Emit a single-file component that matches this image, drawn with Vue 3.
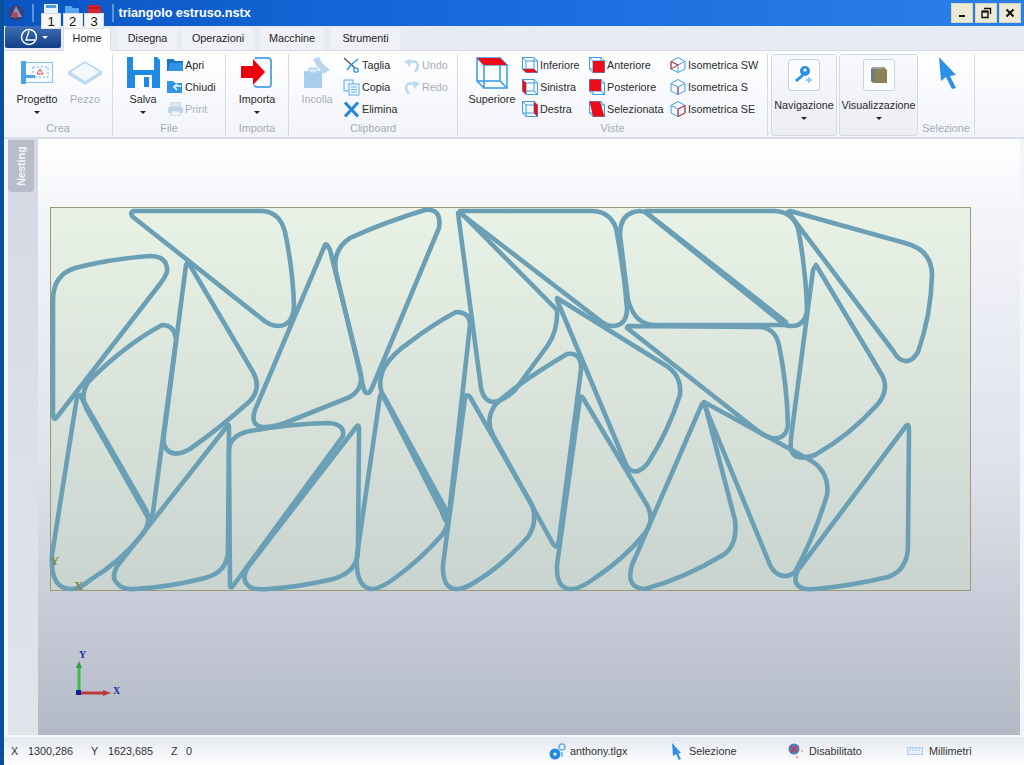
<script setup>
const tabs = [
  { label: 'Home', width: 48, gap: 7, active: true },
  { label: 'Disegna', width: 59, gap: 5 },
  { label: 'Operazioni', width: 72, gap: 6 },
  { label: 'Macchine', width: 64, gap: 7 },
  { label: 'Strumenti', width: 69, gap: 0 }
]

const wireViews = [
  [
    { label: 'Inferiore', face: '1,24 24,24 31,31 8,31' },
    { label: 'Sinistra', face: '1,1 8,8 8,31 1,24' },
    { label: 'Destra', face: '24,1 31,8 31,31 24,24' }
  ],
  [
    { label: 'Anteriore', face: '8,8 31,8 31,31 8,31' },
    { label: 'Posteriore', face: '1,1 24,1 24,24 1,24' },
    { label: 'Selezionata', face: '1,1 22,1 31,31 8,31' }
  ]
]

const isoViews = [
  { label: 'Isometrica SW', red: 'M2 9 L16 16 L2 24 Z' },
  { label: 'Isometrica S', red: 'M16 16 L16 31' },
  { label: 'Isometrica SE', red: 'M30 9 L16 16 L16 31 L30 24 Z' }
]

// nested parts, in page coordinates
const pieces = [
  'M53 412 L53 300 Q53 275 75 268 Q110 259 150 256 Q168 256 167 272 Q165 278 160 284 L57 417 Q53 422 53 412Z',
  'M134 211 L262 211 Q280 212 285 232 Q293 270 294 306 Q293 326 278 326 Q270 326 262 319 L133 217 Q129 213 134 211Z',
  'M188 262 L253 372 Q262 388 250 401 Q220 428 190 449 Q172 459 165 447 Q163 443 164 435 L186 265Z',
  'M162 325 Q175 325 176 340 L153 512 Q150 522 146 514 L86 408 Q80 396 88 382 Q125 345 162 325Z',
  'M77 397 L52 555 Q50 590 72 589 Q80 589 90 580 Q120 562 142 535 Q152 522 146 510 L80 395Z',
  'M228 425 L118 565 Q110 578 118 584 Q123 590 135 589 Q170 587 205 578 Q228 572 228 550 L229 430 Q229 424 228 425Z',
  'M230 585 L229 450 Q230 435 250 431 Q290 424 328 423 Q345 424 343 436 L233 586 Q230 589 230 585Z',
  'M357 426 L248 567 Q240 580 250 587 Q255 590 268 589 Q300 587 333 579 Q358 572 358 550 L359 430 Q359 424 357 426Z',
  'M325 245 L255 410 Q250 425 262 427 Q270 428 285 423 L350 397 Q365 388 360 370 L330 250 Q326 242 325 245Z',
  'M425 210 Q442 208 439 228 L372 388 Q368 397 364 390 L336 272 Q332 250 350 238 Q385 222 425 210Z',
  'M456 312 Q470 312 470 325 L449 515 Q447 528 442 512 L385 400 Q376 385 384 368 Q392 354 410 342 Q432 325 456 312Z',
  'M380 396 L357 555 Q355 588 372 589 Q380 589 395 578 Q420 560 442 535 Q452 522 445 508 L384 396 Q382 392 380 396Z',
  'M458 213 L481 388 Q484 402 494 402 Q505 400 515 390 L548 345 Q558 330 557 310 L460 212Z',
  'M460 211 L593 211 Q610 212 616 228 Q624 270 627 308 Q627 326 612 326 Q606 326 598 319 L460 213Z',
  'M786 325 L655 325 Q635 325 628 300 L620 235 Q620 212 640 211 Q645 211 652 217 L786 322Z',
  'M646 211 L775 211 Q792 212 798 228 Q806 270 807 310 Q805 327 790 326 Q785 326 780 321 L645 212Z',
  'M790 211 L905 243 Q932 250 932 275 Q931 315 918 352 Q912 362 905 361 Q898 360 894 352 L788 212Z',
  'M816 265 L882 375 Q890 390 877 405 Q850 435 815 455 Q795 462 791 450 Q790 445 792 430 L813 270Z',
  'M628 326 L760 327 Q775 328 779 345 Q787 385 788 425 Q786 440 772 438 Q765 437 758 431 L627 328Z',
  'M557 298 L665 365 Q682 375 680 395 Q668 432 648 463 Q640 473 633 471 Q628 470 625 462 L557 300Z',
  'M567 354 Q582 352 581 370 L559 540 Q557 552 552 542 L493 435 Q485 420 495 405 Q515 385 567 354Z',
  'M580 398 L557 565 Q556 590 572 589 Q580 589 595 578 Q625 558 645 533 Q655 520 647 505 L583 398 Q581 395 580 398Z',
  'M465 398 L443 565 Q442 590 458 589 Q465 589 480 579 Q505 563 528 537 Q538 522 532 505 L470 397 Q466 393 465 398Z',
  'M702 404 L632 565 Q625 588 645 589 Q685 578 723 555 Q738 545 735 520 L705 405Z',
  'M704 402 L810 460 Q830 472 827 495 Q815 535 795 572 Q788 578 780 575 Q774 573 770 565 L704 404Z',
  'M906 426 L798 570 Q792 582 800 587 Q805 590 815 589 Q850 586 888 577 Q908 570 908 545 L909 430 Q909 423 906 426Z'
]
</script>

<template>
  <div class="window">
    <header class="titlebar">
      <svg class="app-icon" viewBox="0 0 18 18">
        <circle cx="9" cy="9" r="8" fill="#33407e" />
        <path d="M9 2 L15 13 L4 13Z" fill="#8d93b8" />
        <circle cx="8" cy="11" r="3" fill="#b2485c" />
      </svg>
      <span class="bar-sep"></span>
      <div class="quick">
        <div class="quick-item">
          <svg viewBox="0 0 16 14"><rect x="1" y="0" width="14" height="14" fill="#e8f2fc" /><rect x="3" y="1" width="10" height="3" fill="#4d97e4" /></svg>
          <span class="keytip">1</span>
        </div>
        <div class="quick-item">
          <svg viewBox="0 0 16 14"><path d="M1 2 H7 L9 4 H15 V13 H1Z" fill="#55a8ee" /></svg>
          <span class="keytip">2</span>
        </div>
        <div class="quick-item">
          <svg viewBox="0 0 16 14"><path d="M2 1 H13 L15 3 V13 H2Z" fill="#d8242c" /><path d="M2 4 H15" stroke="#8f1520" /></svg>
          <span class="keytip">3</span>
        </div>
      </div>
      <span class="bar-sep second"></span>
      <span class="doc-title">triangolo estruso.nstx</span>
      <div class="win-buttons">
        <button class="win-btn"><svg viewBox="0 0 12 12"><rect x="3" y="8" width="6" height="2" fill="#111" /></svg></button>
        <button class="win-btn"><svg viewBox="0 0 12 12"><path d="M4 1.5 H10.5 V7 M2 4.5 H8 V10.5 H2Z" fill="none" stroke="#111" stroke-width="1.4" /><path d="M2 4.5 H8" stroke="#111" stroke-width="2" /></svg></button>
        <button class="win-btn"><svg viewBox="0 0 12 12"><path d="M2.5 2.5 L9.5 9.5 M9.5 2.5 L2.5 9.5" stroke="#111" stroke-width="2" /></svg></button>
      </div>
    </header>

    <nav class="tabrow">
      <button class="app-menu">
        <svg width="20" height="18" viewBox="0 0 20 18">
          <circle cx="10" cy="9" r="7.5" fill="none" stroke="#fff" stroke-width="1.4" />
          <path d="M10 3 L7 12 H16" fill="none" stroke="#fff" stroke-width="1.3" />
        </svg>
        <i class="caret white"></i>
      </button>
      <div
        v-for="t in tabs"
        :key="t.label"
        class="tab"
        :class="{ active: t.active }"
        :style="{ width: t.width + 'px', marginRight: t.gap + 'px' }"
      >{{ t.label }}</div>
    </nav>

    <section class="ribbon">
      <div class="group crea">
        <div class="group-body">
          <div class="big">
            <div class="big-icon">
              <svg width="32" height="23" viewBox="0 0 32 23">
                <rect x="0.5" y="1.5" width="31" height="20" fill="#f4f9fe" stroke="#8cc0ec" />
                <rect x="0" y="0" width="5" height="23" fill="#4da3e8" />
                <rect x="5" y="14" width="9" height="3" fill="#4da3e8" />
                <rect x="12" y="6" width="15" height="10" fill="none" stroke="#6fb2ea" stroke-dasharray="2 2" />
                <path d="M16 13 L19 8 L22 13Z" fill="none" stroke="#e2484c" />
              </svg>
            </div>
            <span>Progetto</span>
            <i class="caret"></i>
          </div>
          <div class="big disabled">
            <div class="big-icon">
              <svg width="34" height="24" viewBox="0 0 34 24">
                <path d="M17 1 L33 11 L17 21 L1 11Z" fill="#f3f8fd" stroke="#a9d0f0" stroke-width="1.4" />
                <path d="M1 11 V13 L17 23 L33 13 V11" fill="none" stroke="#a9d0f0" stroke-width="1.4" />
              </svg>
            </div>
            <span>Pezzo</span>
          </div>
        </div>
        <div class="group-label">Crea</div>
      </div>

      <div class="group file">
        <div class="group-body">
          <div class="big">
            <div class="big-icon">
              <svg width="33" height="31" viewBox="0 0 33 31">
                <path d="M0 0 H30 L33 3 V31 H0Z" fill="#1e8ae4" />
                <rect x="6" y="0" width="21" height="13" fill="#fff" />
                <rect x="8" y="18" width="17" height="13" fill="#fff" />
                <rect x="17" y="20" width="5" height="10" fill="#1e8ae4" />
              </svg>
            </div>
            <span>Salva</span>
            <i class="caret"></i>
          </div>
          <div class="small-col">
            <div class="small">
              <svg width="16" height="14" viewBox="0 0 16 14"><path d="M0 1 H6 L8 3 H16 V13 H1Z" fill="#2f95ea" /><path d="M0 1 V13 H1 L3 5 H16 V3 H8 L6 1Z" fill="#1874c4" /></svg>
              <span>Apri</span>
            </div>
            <div class="small">
              <svg width="16" height="14" viewBox="0 0 16 14"><path d="M0 1 H6 L8 3 H15 V13 H0Z" fill="#2f95ea" /><path d="M14 6 H8 M10 4 L7 7 L10 10" fill="none" stroke="#fff" stroke-width="1.6" /></svg>
              <span>Chiudi</span>
            </div>
            <div class="small disabled">
              <svg width="16" height="14" viewBox="0 0 16 14"><rect x="4" y="0" width="9" height="5" fill="#dfe6ee" stroke="#bfd2e4" /><rect x="1" y="5" width="15" height="6" rx="1" fill="#bcd4ea" /><rect x="4" y="9" width="9" height="5" fill="#f0f4f8" stroke="#bfd2e4" /></svg>
              <span>Print</span>
            </div>
          </div>
        </div>
        <div class="group-label">File</div>
      </div>

      <div class="group importa">
        <div class="group-body">
          <div class="big">
            <div class="big-icon">
              <svg width="32" height="31" viewBox="0 0 32 31">
                <path d="M14 2 Q14 1 15 1 H27 Q30 1 30 4 V27 Q30 30 27 30 H16 Q14 30 13 28" fill="#fff" stroke="#2b8ee0" stroke-width="1.5" />
                <path d="M0 9 H12 V2 L24 15 L12 28 V21 H0Z" fill="#f0000c" />
              </svg>
            </div>
            <span>Importa</span>
            <i class="caret"></i>
          </div>
        </div>
        <div class="group-label">Importa</div>
      </div>

      <div class="group clipboard">
        <div class="group-body">
          <div class="big disabled">
            <div class="big-icon">
              <svg width="28" height="31" viewBox="0 0 28 31">
                <rect x="1" y="14" width="18" height="17" fill="#a9cdec" />
                <rect x="6" y="11" width="8" height="5" fill="#d5e6f5" stroke="#a9cdec" />
                <path d="M10 2 L16 0 L20 7 L27 13 L20 17 L14 9Z" fill="#bad7ef" />
              </svg>
            </div>
            <span>Incolla</span>
          </div>
          <div class="small-col cut-col">
            <div class="small">
              <svg width="17" height="17" viewBox="0 0 17 17"><path d="M1 1 L12 11" stroke="#444" stroke-width="1.1" /><path d="M15 2 L8 8 L4 13" stroke="#2f95ea" stroke-width="1.5" fill="none" /><circle cx="13" cy="13" r="2.2" fill="none" stroke="#2f95ea" stroke-width="1.3" /></svg>
              <span>Taglia</span>
            </div>
            <div class="small">
              <svg width="17" height="17" viewBox="0 0 17 17"><rect x="1" y="1" width="9" height="11" fill="#eaf4fc" stroke="#5aa9e6" /><rect x="6" y="5" width="10" height="11" fill="#f8fbfe" stroke="#5aa9e6" /><path d="M8 8 H14 M8 10.5 H14 M8 13 H14" stroke="#5aa9e6" /></svg>
              <span>Copia</span>
            </div>
            <div class="small">
              <svg width="17" height="17" viewBox="0 0 17 17"><path d="M2 1.5 L15 15.5 M15 1.5 L2 15.5" stroke="#2389e0" stroke-width="3.2" /></svg>
              <span>Elimina</span>
            </div>
          </div>
          <div class="small-col">
            <div class="small disabled">
              <svg width="16" height="15" viewBox="0 0 16 15"><path d="M4 6 Q11 0 14 7 Q14 10 11 14" fill="none" stroke="#bcd9f2" stroke-width="2.6" /><path d="M0 3 L7 1 L6 9Z" fill="#bcd9f2" /></svg>
              <span>Undo</span>
            </div>
            <div class="small disabled">
              <svg width="16" height="15" viewBox="0 0 16 15"><path d="M12 6 Q5 0 2 7 Q2 10 5 14" fill="none" stroke="#bcd9f2" stroke-width="2.6" /><path d="M16 3 L9 1 L10 9Z" fill="#bcd9f2" /></svg>
              <span>Redo</span>
            </div>
          </div>
        </div>
        <div class="group-label">Clipboard</div>
      </div>

      <div class="group viste">
        <div class="group-body">
          <div class="big">
            <div class="big-icon">
              <svg width="32" height="32" viewBox="0 0 32 32" class="wire">
                <rect x="1" y="1" width="23" height="23" />
                <rect x="8" y="8" width="23" height="23" />
                <path d="M1 1 L8 8 M24 1 L31 8 M1 24 L8 31 M24 24 L31 31" />
                <polygon points="1,1 24,1 31,8 8,8" fill="#ec0d18" stroke="none" />
              </svg>
            </div>
            <span>Superiore</span>
          </div>
          <div v-for="(col, i) in wireViews" :key="i" class="small-col wire-col">
            <div v-for="v in col" :key="v.label" class="small">
              <svg width="16" height="16" viewBox="0 0 32 32" class="wire">
                <rect x="1" y="1" width="23" height="23" />
                <rect x="8" y="8" width="23" height="23" />
                <path d="M1 1 L8 8 M24 1 L31 8 M1 24 L8 31 M24 24 L31 31" />
                <polygon :points="v.face" fill="#ec0d18" stroke="none" />
              </svg>
              <span>{{ v.label }}</span>
            </div>
          </div>
          <div class="small-col">
            <div v-for="v in isoViews" :key="v.label" class="small">
              <svg width="16" height="16" viewBox="0 0 32 32" class="wire">
                <path d="M16 1 L30 9 V24 L16 31 L2 24 V9Z M2 9 L16 16 L30 9 M16 16 V31" />
                <path :d="v.red" style="stroke: #d8202c" />
              </svg>
              <span>{{ v.label }}</span>
            </div>
          </div>
        </div>
        <div class="group-label">Viste</div>
      </div>

      <div class="drop nav">
        <div class="drop-icon">
          <svg width="20" height="20" viewBox="0 0 20 20">
            <circle cx="11" cy="6" r="5" fill="#2c8fe4" />
            <circle cx="11" cy="5" r="1.6" fill="#fff" />
            <path d="M8 9 L1 15 L3 17 L10 11Z" fill="#2c8fe4" />
            <path d="M15 12 V18 M12 15 H18" stroke="#78b8ec" stroke-width="1.4" />
          </svg>
        </div>
        <span>Navigazione</span>
        <i class="caret"></i>
      </div>

      <div class="drop vis">
        <div class="drop-icon">
          <svg width="18" height="18" viewBox="0 0 18 18">
            <path d="M3 1 H14 L17 4 V17 H3 L1 15 V3Z" fill="#8c8256" />
            <path d="M1 3 L3 1 H14 L12 3Z" fill="#9ba3a8" />
            <path d="M1 3 H5 V15 H1Z" fill="#6d7a88" />
          </svg>
        </div>
        <span>Visualizzazione</span>
        <i class="caret"></i>
      </div>

      <div class="group selezione">
        <div class="group-body arrow-body">
          <svg width="20" height="32" viewBox="0 0 20 32">
            <path d="M1 0 L18 18 L12 19 L18 31 L14 32 L8 20 L3 24Z" fill="#2b90e6" />
          </svg>
        </div>
        <div class="group-label">Selezione</div>
      </div>
    </section>

    <main class="main">
      <aside class="sidebar">
        <div class="side-tab"><span>Nesting</span></div>
      </aside>
      <div class="viewport">
        <svg class="scene" viewBox="38 139 982 596">
          <defs>
            <linearGradient id="plateFill" x1="0" y1="0" x2="0" y2="1">
              <stop offset="0" stop-color="#e9f2e5" />
              <stop offset="1" stop-color="#c9d4d0" />
            </linearGradient>
          </defs>
          <rect x="50.5" y="207.5" width="920" height="383" fill="url(#plateFill)" stroke="#9a9b72" />
          <path
            v-for="(d, i) in pieces"
            :key="i"
            :d="d"
            fill="none"
            stroke="#6b9fb5"
            stroke-width="4.6"
            stroke-linejoin="round"
          />
          <text x="50" y="565" class="mark">Y</text>
          <text x="74" y="590" class="mark">X</text>
          <path d="M79 692 V665" stroke="#3fbb4c" stroke-width="3" />
          <path d="M79 661 L76 668 H82Z" fill="#3a9a48" />
          <path d="M80 693 H106" stroke="#b83a3a" stroke-width="3" />
          <path d="M111 693 L103 690 V696Z" fill="#b83a3a" />
          <rect x="76" y="690" width="5" height="5" fill="#0a1f9a" />
          <text x="79" y="658" class="axis">Y</text>
          <text x="113" y="694" class="axis">X</text>
        </svg>
      </div>
    </main>

    <footer class="statusbar">
      <div class="coords">
        <span class="c-x">X</span><span class="c-xv">1300,286</span>
        <span class="c-y">Y</span><span class="c-yv">1623,685</span>
        <span class="c-z">Z</span><span>0</span>
      </div>
      <div class="status-item s1">
        <svg width="17" height="17" viewBox="0 0 17 17"><circle cx="6" cy="11" r="5.5" fill="#2389e0" /><circle cx="6" cy="11" r="1.6" fill="#fff" /><circle cx="13" cy="4" r="3" fill="none" stroke="#6cb0ea" stroke-width="1.5" /><path d="M13 9 V14" stroke="#6cb0ea" stroke-width="1.5" /></svg>
        <span>anthony.tlgx</span>
      </div>
      <div class="status-item s2">
        <svg width="11" height="17" viewBox="0 0 11 17"><path d="M1 0 L10 10 L7 10.5 L10 16 L8 17 L5 11 L2 13Z" fill="#2b90e6" /></svg>
        <span>Selezione</span>
      </div>
      <div class="status-item s3">
        <svg width="16" height="16" viewBox="0 0 16 16"><circle cx="6" cy="6" r="5.5" fill="#4b7cc0" /><path d="M3 3 L9 9 M9 3 L3 9" stroke="#e23040" stroke-width="1.6" /><circle cx="14" cy="8" r="1.2" fill="#eeb0b8" /><circle cx="9" cy="14" r="1.5" fill="#eeb0b8" /></svg>
        <span>Disabilitato</span>
      </div>
      <div class="status-item s4">
        <svg width="16" height="8" viewBox="0 0 16 8"><rect x="0.5" y="0.5" width="15" height="7" fill="#e2eefa" stroke="#a8cdee" /><path d="M3 1 V4 M6 1 V4 M9 1 V4 M12 1 V4" stroke="#a8cdee" /></svg>
        <span>Millimetri</span>
      </div>
    </footer>
  </div>
</template>

<style scoped>
.window {
  width: 1024px;
  height: 765px;
  display: flex;
  flex-direction: column;
  box-sizing: border-box;
  border-left: 4px solid #0a4f9e;
  background: #f3f5fa;
  font-family: "Liberation Sans", Arial, sans-serif;
  font-size: 10.8px;
  color: #2a2a2a;
  overflow: hidden;
}

.titlebar {
  height: 26px;
  flex: none;
  display: flex;
  align-items: center;
  margin-left: -4px;
  background: linear-gradient(90deg, #0a55c2 0%, #1668da 40%, #2b80ea 100%);
  position: relative;
}

.app-icon {
  width: 18px;
  height: 18px;
  margin-left: 7px;
}

.bar-sep {
  width: 2px;
  height: 18px;
  margin-left: 7px;
  background: #5d95dc;
}

.bar-sep.second {
  margin-left: 0;
}

.quick {
  display: flex;
  margin-left: 6px;
  margin-right: 7px;
}

.quick-item {
  width: 21.5px;
  height: 26px;
  display: flex;
  justify-content: center;
  position: relative;
}

.quick-item svg {
  width: 16px;
  height: 14px;
  margin-top: 4px;
}

.keytip {
  position: absolute;
  left: 1px;
  top: 13px;
  width: 20px;
  height: 16px;
  background: #f6f6f4;
  border: 1px solid #d8dbe0;
  box-sizing: border-box;
  color: #111;
  font-size: 13px;
  line-height: 16px;
  text-align: center;
  z-index: 2;
}

.doc-title {
  margin-left: 5px;
  color: #fff;
  font-size: 12.6px;
  font-weight: bold;
}

.win-buttons {
  margin-left: auto;
  margin-right: 3px;
  display: flex;
  gap: 2px;
}

.win-btn {
  width: 22px;
  height: 20px;
  padding: 3px 4px;
  border: 1px solid #d5d3c4;
  background: #ece9d4;
  box-sizing: border-box;
}

.win-btn svg {
  display: block;
  width: 12px;
  height: 12px;
}

.tabrow {
  height: 24px;
  flex: none;
  display: flex;
  align-items: flex-end;
  background: #e7ebf3;
  position: relative;
  z-index: 1;
}

.app-menu {
  width: 56px;
  height: 22px;
  margin: 0 2px 2px 1px;
  padding: 0;
  border: none;
  border-radius: 2px;
  background: linear-gradient(180deg, #3f6fb4, #123f86);
  display: flex;
  align-items: center;
  justify-content: center;
  gap: 3px;
}

.tab {
  height: 22px;
  text-align: center;
  line-height: 21px;
  background: #eff1f7;
  color: #222;
}

.tab.active {
  background: #fff;
  border-radius: 3px 3px 0 0;
  border: 1px solid #d8dde6;
  border-bottom: none;
  box-sizing: border-box;
  height: 24px;
  margin-bottom: -1px;
}

.ribbon {
  height: 89px;
  flex: none;
  display: flex;
  box-sizing: border-box;
  padding-top: 3px;
  background: linear-gradient(180deg, #ffffff 0%, #f2f4fa 100%);
  border-top: 1px solid #d5dae2;
  border-bottom: 2px solid #d8dee8;
}

.group {
  display: flex;
  flex-direction: column;
  height: 82px;
  flex: none;
  box-sizing: border-box;
  border-right: 1px solid #d6dae2;
}

.group-body {
  height: 66px;
  display: flex;
  box-sizing: border-box;
}

.group-body > * {
  flex: none;
}

.group-label {
  height: 16px;
  line-height: 16px;
  text-align: center;
  color: #a5abb4;
}

.crea { width: 109px; }
.crea .group-body { padding-left: 9px; }
.crea .big { width: 48px; }

.file { width: 113px; }
.file .group-body { padding-left: 8px; }
.file .big { width: 44px; }
.file .small-col { margin-left: 2px; }

.importa { width: 63px; }
.importa .big { width: 100%; }

.clipboard { width: 169px; }
.clipboard .group-body { padding-left: 4px; }
.clipboard .big { width: 48px; }
.cut-col { width: 61px; margin-left: 2px; }

.viste { width: 310px; }
.viste .group-body { padding-left: 4px; }
.viste .big { width: 60px; }
.wire-col { width: 67px; }
.wire-col + .wire-col { width: 81px; }

.big {
  display: flex;
  flex-direction: column;
  align-items: center;
}

.big-icon {
  height: 37px;
  display: flex;
  align-items: center;
  justify-content: center;
}

.big span,
.drop span {
  height: 16px;
  line-height: 16px;
  white-space: nowrap;
}

.small-col {
  display: flex;
  flex-direction: column;
}

.small {
  height: 22px;
  display: flex;
  align-items: center;
  gap: 2px;
  white-space: nowrap;
}

.disabled,
.disabled span {
  color: #a9afb8;
}

.caret {
  display: block;
  width: 0;
  height: 0;
  margin-top: 4px;
  border-left: 3px solid transparent;
  border-right: 3px solid transparent;
  border-top: 3px solid #222;
}

.caret.white {
  margin-top: 0;
  border-top-color: #fff;
}

.wire {
  fill: none;
  stroke: #3f9fe6;
  stroke-width: 1.6;
}

.small .wire {
  stroke-width: 2;
  flex: none;
}

.drop {
  height: 82px;
  flex: none;
  margin-left: 3px;
  box-sizing: border-box;
  border: 1px solid #d3d8e2;
  border-radius: 3px;
  background: linear-gradient(180deg, #f8f9fc, #eceef4);
  display: flex;
  flex-direction: column;
  align-items: center;
  padding-top: 4px;
}

.drop-icon {
  width: 32px;
  height: 32px;
  margin-bottom: 6px;
  box-sizing: border-box;
  border: 1px solid #ccd2dc;
  border-radius: 3px;
  background: #fbfcfe;
  display: flex;
  align-items: center;
  justify-content: center;
}

.nav { width: 66px; }
.vis { width: 79px; margin-left: 2px; }

.selezione {
  width: 57px;
}

.arrow-body {
  justify-content: center;
  padding: 3px 0 0 3px;
}

.main {
  flex: 1;
  display: flex;
  min-height: 0;
}

.sidebar {
  width: 30px;
  margin-left: 4px;
  flex: none;
  background: linear-gradient(180deg, #d6d9e5, #e2e4ec);
}

.side-tab {
  width: 26px;
  height: 52px;
  margin-top: 1px;
  background: #b8bdca;
  border-radius: 0 0 4px 4px;
  display: flex;
  align-items: center;
  justify-content: center;
}

.side-tab span {
  display: block;
  transform: rotate(-90deg);
  color: #f4f5f8;
  font-weight: bold;
  white-space: nowrap;
}

.viewport {
  width: 982px;
  flex: none;
  background: linear-gradient(180deg, #ffffff 0%, #f4f5fa 12%, #dfe2ec 55%, #b4b9c7 100%);
}

.scene {
  display: block;
  width: 982px;
  height: 596px;
}

.mark {
  font-family: "Liberation Serif", serif;
  font-size: 13px;
  font-weight: bold;
  fill: #7d8a50;
}

.axis {
  font-family: "Liberation Serif", serif;
  font-size: 10px;
  font-weight: bold;
  fill: #1c2aa8;
}

.statusbar {
  height: 30px;
  flex: none;
  display: flex;
  align-items: center;
  box-sizing: border-box;
  border-top: 2px solid #f6f7fb;
  background: linear-gradient(180deg, #e4e8f0, #ffffff);
  color: #333;
}

.coords {
  display: flex;
  width: 545px;
  padding-left: 7px;
  box-sizing: border-box;
}

.c-x { width: 17px; }
.c-xv { width: 63px; }
.c-y { width: 17px; }
.c-yv { width: 63px; }
.c-z { width: 15px; }

.status-item {
  display: flex;
  align-items: center;
}

.s1 { width: 122px; gap: 4px; }
.s2 { width: 117px; gap: 7px; }
.s3 { width: 119px; gap: 5px; }
.s4 { gap: 6px; }
</style>

<style>
html,
body {
  margin: 0;
  background: #f3f5fa;
}
</style>
